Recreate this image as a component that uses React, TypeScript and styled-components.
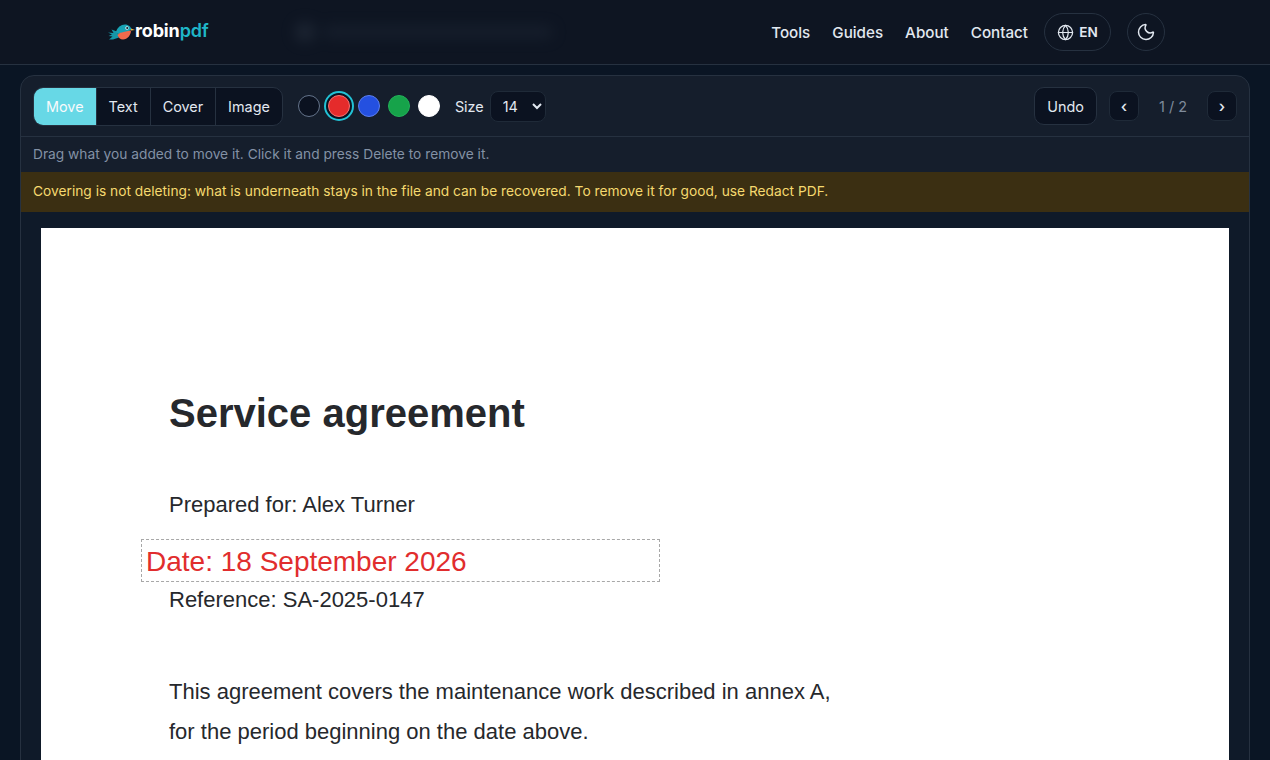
import { useState } from "react";
import styled, { createGlobalStyle } from "styled-components";
import { Globe, Moon } from "lucide-react";

const tools = ["Move", "Text", "Cover", "Image"];
const navLinks = ["Tools", "Guides", "About", "Contact"];
const swatches = [
  { color: "#0b1220", border: "#64748b" },
  { color: "#e52b2b", border: "#f87171" },
  { color: "#2450e0", border: "#5b7ff0" },
  { color: "#16a34a", border: "#22b35a" },
  { color: "#ffffff", border: "#ffffff" },
];

const Logo = () => (
  <svg width="27" height="16" viewBox="0 0 27 16" aria-hidden="true">
    <path d="M0 8.5 L5.5 9 L3.5 5.5 L9 7.5 L11 13.5 L5 15.5 L1 15.5 L4.5 12.5 L0.5 12 L4 10.5 Z" fill="#1596a8" />
    <path d="M8 8 C9 3.5 13 0.5 17 0.5 C20.5 0.5 23 3 23.5 5.5 L18 9 L10 10 Z" fill="#17a2b4" />
    <path d="M9.5 11 C11 8.5 15 8 23 6.5 C23 11 19.5 15.5 15 15.5 C12 15.5 10.5 13.5 9.5 11 Z" fill="#ef6a4c" />
    <path d="M23 4.6 L27 6 L23 6.6 Z" fill="#f2b544" />
    <circle cx="19" cy="4" r="1.7" fill="#e6f7fa" />
    <circle cx="19.2" cy="4" r="1" fill="#0b1220" />
  </svg>
);

const App = () => {
  const [tool, setTool] = useState("Move");
  const [color, setColor] = useState(1);

  return (
    <>
      <GlobalStyle />
      <Header>
        <Brand>
          <Logo />
          <BrandName>
            robin<BrandAccent>pdf</BrandAccent>
          </BrandName>
        </Brand>
        <BlurredSlot>
          <BlurDot />
          <BlurBar />
        </BlurredSlot>
        <Nav>
          {navLinks.map((link) => (
            <NavLink key={link}>{link}</NavLink>
          ))}
          <LangButton>
            <Globe size={17} strokeWidth={1.75} />
            EN
          </LangButton>
          <ThemeButton aria-label="Theme">
            <Moon size={20} strokeWidth={1.75} />
          </ThemeButton>
        </Nav>
      </Header>

      <Main>
        <Panel>
          <Toolbar>
            <ToolGroup>
              {tools.map((name) => (
                <ToolButton key={name} $active={tool === name} onClick={() => setTool(name)}>
                  {name}
                </ToolButton>
              ))}
            </ToolGroup>
            <Swatches>
              {swatches.map((s, i) => (
                <Swatch
                  key={s.color}
                  $color={s.color}
                  $border={s.border}
                  $selected={color === i}
                  onClick={() => setColor(i)}
                />
              ))}
            </Swatches>
            <SizeLabel>
              Size
              <SizeSelect defaultValue="14">
                <option>10</option>
                <option>12</option>
                <option>14</option>
                <option>18</option>
              </SizeSelect>
            </SizeLabel>
            <Spacer />
            <UndoButton>Undo</UndoButton>
            <Pager>
              <PageButton>‹</PageButton>
              <PageCount>1 / 2</PageCount>
              <PageButton>›</PageButton>
            </Pager>
          </Toolbar>

          <Hint>Drag what you added to move it. Click it and press Delete to remove it.</Hint>
          <Warning>
            Covering is not deleting: what is underneath stays in the file and can be recovered. To remove it for good, use Redact PDF.
          </Warning>

          <Canvas>
            <Sheet>
              <DocTitle>Service agreement</DocTitle>
              <DocLine $top={55}>Prepared for: Alex Turner</DocLine>
              <DocLine $top={67}>Reference: SA-2025-0147</DocLine>
              <DocLine $top={64}>This agreement covers the maintenance work described in annex A,</DocLine>
              <DocLine $top={12}>for the period beginning on the date above.</DocLine>
              <Annotation>Date: 18 September 2026</Annotation>
            </Sheet>
          </Canvas>
        </Panel>
      </Main>
    </>
  );
};

export default App;

const GlobalStyle = createGlobalStyle`
  html, body {
    margin: 0;
    height: 100%;
    overflow: hidden;
    background: #0a1524;
  }
  body {
    font-family: Inter, "Liberation Sans", sans-serif;
    color: #e2e8f0;
  }
  * {
    box-sizing: border-box;
  }
`;

const Header = styled.header`
  height: 65px;
  padding: 0 105px 0 108px;
  display: flex;
  align-items: center;
  background: #0e1522;
  border-bottom: 1px solid #263140;
`;

const Brand = styled.div`
  display: flex;
  align-items: center;
  gap: 0;
  margin-top: -1px;
`;

const BrandName = styled.span`
  font-family: Inter, sans-serif;
  font-size: 18px;
  font-weight: 700;
  letter-spacing: -0.15px;
  color: #ffffff;
  margin-top: -2px;
`;

const BrandAccent = styled.span`
  color: #1fb6c8;
  font-weight: 600;
`;

const BlurredSlot = styled.div`
  display: flex;
  align-items: center;
  gap: 8px;
  margin-left: 86px;
  filter: blur(7px);
  opacity: 0.55;
`;

const BlurDot = styled.span`
  width: 20px;
  height: 20px;
  border-radius: 50%;
  background: #2a3341;
`;

const BlurBar = styled.span`
  width: 230px;
  height: 12px;
  border-radius: 6px;
  background: #1e2735;
`;

const Nav = styled.nav`
  margin-left: auto;
  display: flex;
  align-items: center;
`;

const NavLink = styled.a`
  font-size: 15.2px;
  font-weight: 500;
  color: #e2e8f0;
  margin-right: 22px;
  cursor: pointer;

  &:last-of-type {
    margin-right: 16px;
  }
`;

const LangButton = styled.button`
  height: 38px;
  width: 67px;
  display: flex;
  align-items: center;
  justify-content: center;
  gap: 5px;
  border-radius: 19px;
  border: 1px solid #263140;
  background: transparent;
  color: #e2e8f0;
  font: 600 13.6px Inter, sans-serif;
`;

const ThemeButton = styled.button`
  width: 38px;
  height: 38px;
  margin-left: 16px;
  display: flex;
  align-items: center;
  justify-content: center;
  border-radius: 50%;
  border: 1px solid #263140;
  background: transparent;
  color: #e2e8f0;
`;

const Main = styled.main`
  padding: 10px 20px 0;
`;

const Panel = styled.section`
  background: #151e2c;
  border: 1px solid #263140;
  border-radius: 14px 14px 0 0;
`;

const Toolbar = styled.div`
  height: 61px;
  padding: 0 12px;
  display: flex;
  align-items: center;
  border-bottom: 1px solid #263140;
`;

const ToolGroup = styled.div`
  display: flex;
  height: 39px;
  background: #0b1220;
  border: 1px solid #263140;
  border-radius: 10px;
  overflow: hidden;
`;

const ToolButton = styled.button<{ $active: boolean }>`
  padding: 0 12px;
  border: 0;
  border-left: 1px solid #263140;
  background: ${(p) => (p.$active ? "#67d8e6" : "transparent")};
  color: ${(p) => (p.$active ? "#f8fafc" : "#e2e8f0")};
  font: 400 14.4px Inter, sans-serif;
  cursor: pointer;

  &:first-child {
    border-left: 0;
  }
`;

const Swatches = styled.div`
  display: flex;
  align-items: center;
  gap: 8px;
  margin-left: 15px;
`;

const Swatch = styled.button<{ $color: string; $border: string; $selected: boolean }>`
  width: 22px;
  height: 22px;
  padding: 0;
  border-radius: 50%;
  background: ${(p) => p.$color};
  border: 1px solid ${(p) => p.$border};
  box-shadow: ${(p) => (p.$selected ? "0 0 0 2px #0b1220, 0 0 0 4px #22c3d6" : "none")};
  cursor: pointer;
`;

const SizeLabel = styled.label`
  display: flex;
  align-items: center;
  gap: 6px;
  margin-left: 15px;
  font-size: 14.4px;
  font-weight: 400;
  color: #e2e8f0;
`;

const SizeSelect = styled.select`
  width: 56px;
  height: 31px;
  padding: 0 0 0 8px;
  background: #0b1220;
  border: 1px solid #1f2a38;
  border-radius: 8px;
  color: #e2e8f0;
  font: 400 14.4px Inter, sans-serif;
`;

const Spacer = styled.div`
  flex: 1;
`;

const UndoButton = styled.button`
  width: 63px;
  height: 38px;
  background: #0b1220;
  border: 1px solid #263140;
  border-radius: 10px;
  color: #e2e8f0;
  font: 400 14.4px Inter, sans-serif;
`;

const Pager = styled.div`
  display: flex;
  align-items: center;
  margin-left: 12px;
`;

const PageButton = styled.button`
  width: 30px;
  height: 30px;
  padding: 0;
  background: #0b1220;
  border: 1px solid #1f2a38;
  border-radius: 8px;
  color: #e2e8f0;
  font: 500 16px Inter, sans-serif;
`;

const PageCount = styled.span`
  width: 68px;
  text-align: center;
  font-size: 14.4px;
  color: #7f8b9c;
`;

const Hint = styled.div`
  height: 35px;
  padding: 0 12px 1px;
  display: flex;
  align-items: center;
  font-size: 13.76px;
  color: #8391a5;
`;

const Warning = styled.div`
  height: 40px;
  padding: 0 12px 3px;
  display: flex;
  align-items: center;
  font-size: 13.76px;
  background: #3b2f12;
  color: #f5d96f;
`;

const Canvas = styled.div`
  padding: 16px 20px 0;
  background: #0f1a29;
`;

const Sheet = styled.div`
  position: relative;
  height: 620px;
  padding: 162px 128px 0;
  background: #ffffff;
  font-family: "Liberation Sans", Arial, sans-serif;
  color: #26282c;
`;

const DocTitle = styled.h1`
  margin: 0;
  font-size: 40px;
  line-height: 46px;
  font-weight: 700;
`;

const DocLine = styled.p<{ $top: number }>`
  margin: ${(p) => p.$top}px 0 0;
  font-size: 22px;
  line-height: 28px;
`;

const Annotation = styled.div`
  position: absolute;
  left: 100px;
  top: 311px;
  width: 519px;
  height: 43px;
  padding-left: 4px;
  border: 1px dashed #a8a8a8;
  font-size: 28px;
  line-height: 43px;
  color: #e12d2d;
`;
